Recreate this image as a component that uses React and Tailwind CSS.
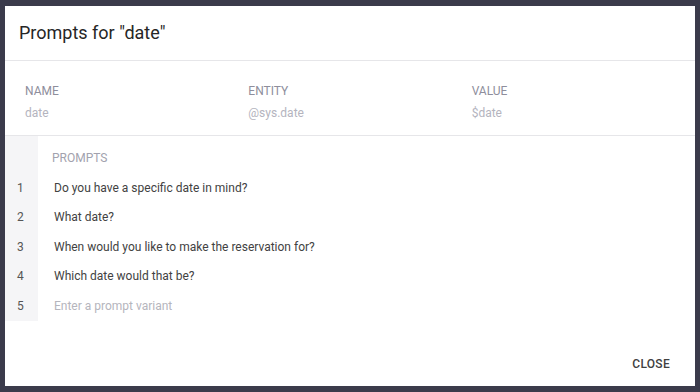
import React from 'react';

const params = [
  { label: 'NAME', value: 'date' },
  { label: 'ENTITY', value: '@sys.date' },
  { label: 'VALUE', value: '$date' },
];

const prompts = [
  'Do you have a specific date in mind?',
  'What date?',
  'When would you like to make the reservation for?',
  'Which date would that be?',
];

const App = () => {
  return (
    <div className="w-[700px] h-[392px] bg-[#3b3b4b] pl-[5px] pt-[6px] font-['Roboto',sans-serif]">
      <div className="w-[690px] h-[380px] bg-white flex flex-col">
        {/* Header */}
        <div className="h-[55px] flex items-center pl-[14px] border-b border-[#e6e6e9]">
          <h1 className="text-[18px] text-[#262626] leading-none">Prompts for "date"</h1>
        </div>

        {/* Parameter info */}
        <div className="h-[75px] flex pl-[20px] pt-[23px] border-b border-[#e6e6e9]">
          {params.map(p => (
            <div key={p.label} className="w-[225px]">
              <div className="text-[12px] leading-[14px] text-[#8e8e9c]">{p.label}</div>
              <div className="text-[12px] leading-[14px] text-[#b4b4be] mt-[8px]">{p.value}</div>
            </div>
          ))}
        </div>

        {/* Prompts list */}
        <div className="flex flex-col">
          <div className="flex h-[37px]">
            <div className="w-[33px] bg-[#f5f5f7]"></div>
            <div className="pl-[14px] pt-[15px] text-[12px] leading-[14px] text-[#a2a2ae]">PROMPTS</div>
          </div>
          {[...prompts, null].map((t, i) => (
            <div key={i} className="flex h-[29.5px]">
              <div className="w-[33px] bg-[#f5f5f7] flex items-center pl-[12px] text-[12px] text-[#555]">{i + 1}</div>
              <div className={`flex items-center pl-[16px] text-[12px] ${t ? 'text-[#424242]' : 'text-[#b5b5bd]'}`}>
                {t || 'Enter a prompt variant'}
              </div>
            </div>
          ))}
        </div>

        {/* Footer */}
        <div className="flex-1 flex items-end justify-end pr-[25px] pb-[13px]">
          <button className="text-[12px] font-medium text-[#404040] tracking-[0.3px]">CLOSE</button>
        </div>
      </div>
    </div>
  );
};

export default App;
